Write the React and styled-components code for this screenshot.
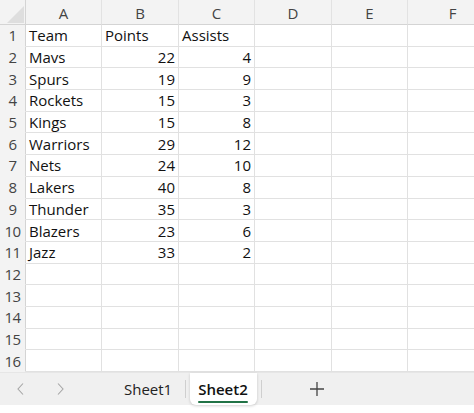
import styled, { createGlobalStyle } from 'styled-components';

const GlobalStyle = createGlobalStyle`
  html, body {
    margin: 0;
    padding: 0;
    background: #fff;
    overflow: hidden;
  }
  body {
    font-family: 'Open Sans', 'Noto Sans', 'Liberation Sans', sans-serif;
  }
`;

const COLUMNS = ['A', 'B', 'C', 'D', 'E', 'F'];

const rows = [
  ['Team', 'Points', 'Assists'],
  ['Mavs', 22, 4],
  ['Spurs', 19, 9],
  ['Rockets', 15, 3],
  ['Kings', 15, 8],
  ['Warriors', 29, 12],
  ['Nets', 24, 10],
  ['Lakers', 40, 8],
  ['Thunder', 35, 3],
  ['Blazers', 23, 6],
  ['Jazz', 33, 2],
];

const TOTAL_ROWS = 16;

function App() {
  const body = [];
  for (let r = 0; r < TOTAL_ROWS; r++) {
    const data = rows[r] || [];
    body.push(<RowHead key={`h${r}`}>{r + 1}</RowHead>);
    COLUMNS.forEach((c, i) => {
      const value = data[i];
      const numeric = typeof value === 'number';
      body.push(
        <Cell key={`${c}${r}`} $numeric={numeric}>
          {value}
        </Cell>
      );
    });
  }

  return (
    <>
      <GlobalStyle />
      <Window>
        <Grid>
          <Corner>
            <CornerTriangle />
          </Corner>
          {COLUMNS.map((c) => (
            <ColHead key={c}>{c}</ColHead>
          ))}
          {body}
        </Grid>
        <TabBar>
          <NavButton aria-label="previous">
            <svg width="10" height="16" viewBox="0 0 10 16">
              <path d="M7 2.5 L2 8 L7 13.5" fill="none" stroke="#a6a6a6" strokeWidth="1.1" />
            </svg>
          </NavButton>
          <NavButton aria-label="next">
            <svg width="10" height="16" viewBox="0 0 10 16">
              <path d="M3 2.5 L8 8 L3 13.5" fill="none" stroke="#a6a6a6" strokeWidth="1.1" />
            </svg>
          </NavButton>
          <Tabs>
            <Tab>Sheet1</Tab>
            <Divider />
            <Tab $active>
              <TabLabel>Sheet2</TabLabel>
            </Tab>
            <Divider />
            <AddButton aria-label="add sheet">
              <svg width="16" height="16" viewBox="0 0 16 16">
                <path d="M8 1 V15 M1 8 H15" stroke="#444" strokeWidth="1.3" />
              </svg>
            </AddButton>
          </Tabs>
        </TabBar>
      </Window>
    </>
  );
}

const Window = styled.div`
  width: 474px;
  height: 413px;
  display: flex;
  flex-direction: column;
  background: #fff;
  overflow: hidden;
`;

const Grid = styled.div`
  display: grid;
  grid-template-columns: 26px 76px 77px 76px 77px 76px 90px;
  grid-template-rows: 25px repeat(${TOTAL_ROWS}, 21.7px);
  color: #111;
  font-size: 15px;
`;

const Corner = styled.div`
  position: relative;
  background: #f3f3f3;
  border-right: 1px solid #d4d4d4;
  border-bottom: 1px solid #d4d4d4;
`;

const CornerTriangle = styled.div`
  position: absolute;
  right: 1px;
  bottom: 1px;
  width: 0;
  height: 0;
  border-left: 17px solid transparent;
  border-bottom: 17px solid #dedede;
`;

const ColHead = styled.div`
  display: flex;
  align-items: center;
  justify-content: center;
  background: #f3f3f3;
  color: #444;
  font-size: 15px;
  border-right: 1px solid #e2e2e2;
  border-bottom: 1px solid #d4d4d4;
  padding-top: 1px;
`;

const RowHead = styled.div`
  display: flex;
  align-items: center;
  justify-content: center;
  background: #f3f3f3;
  color: #444;
  font-size: 15px;
  border-right: 1px solid #d4d4d4;
  border-bottom: 1px solid #f3f3f3;
  letter-spacing: -0.5px;
`;

const Cell = styled.div`
  display: flex;
  align-items: center;
  justify-content: ${(p) => (p.$numeric ? 'flex-end' : 'flex-start')};
  padding: 0 3px;
  border-right: 1px solid #e1e1e1;
  border-bottom: 1px solid #e1e1e1;
  white-space: nowrap;
  overflow: hidden;
`;

const TabBar = styled.div`
  display: flex;
  align-items: stretch;
  height: 32px;
  background: #f0f0f0;
  border-top: 1px solid #e6e6e6;
`;

const NavButton = styled.div`
  width: 37px;
  display: flex;
  align-items: center;
  justify-content: center;
  margin-left: 2px;
`;

const Tabs = styled.div`
  display: flex;
  align-items: stretch;
  margin-left: 34px;
`;

const Tab = styled.div`
  display: flex;
  align-items: center;
  padding: 0 9px 0 8px;
  margin: 0 4px;
  font-size: 15px;
  color: #222;
  background: ${(p) => (p.$active ? '#fff' : 'transparent')};
  border-radius: 0 0 6px 6px;
  box-shadow: ${(p) => (p.$active ? '0 1px 3px rgba(0,0,0,0.18)' : 'none')};
  font-weight: ${(p) => (p.$active ? 600 : 400)};
`;

const TabLabel = styled.span`
  position: relative;
  color: #111;
  &::after {
    content: '';
    position: absolute;
    left: 0;
    right: 0;
    bottom: -4px;
    height: 2.5px;
    border-radius: 1px;
    background: #217346;
  }
`;

const Divider = styled.div`
  width: 1px;
  background: #cfcfcf;
  margin: 7px 0;
`;

const AddButton = styled.div`
  width: 110px;
  display: flex;
  align-items: center;
  justify-content: center;
`;

export default App;
